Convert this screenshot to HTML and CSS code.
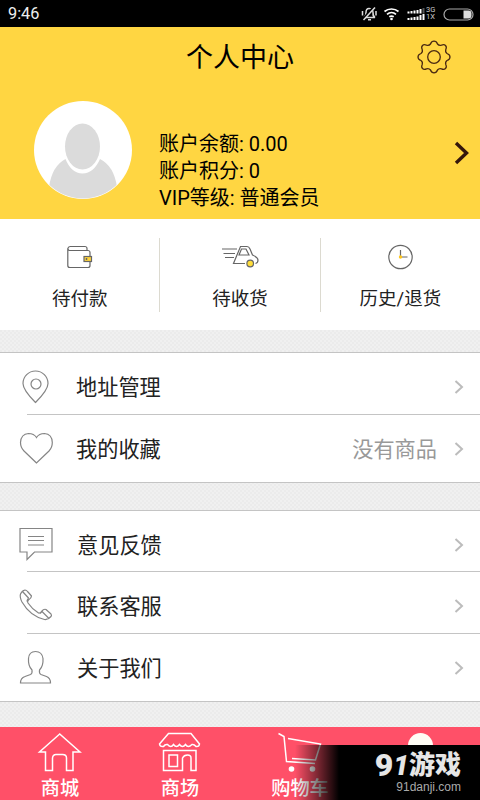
FILE: index.html
```html
<!DOCTYPE html>
<html lang="zh-CN">
<head>
<meta charset="utf-8">
<title>个人中心</title>
<link rel="stylesheet" href="styles.css">
</head>
<body>
<div class="screen">
  <div class="status">
    <span class="time">9:46</span>
    <svg class="status-icons" width="116" height="26" viewBox="0 0 116 26" fill="none" stroke="#ddd" stroke-width="1.200">
      <path d="M4 16.500c2-1 2-3 2-5 0-3 1.500-4 3-4s4 1 4 4 0 4 2 5zM8 18.700h3M2.500 10v4.500M16 10v4.500" stroke-width="1.500"/>
      <path d="M3 18L14 5.500" stroke="#000" stroke-width="2"/><path d="M3.500 19L15 6.500" stroke-width="1.500"/>
      <g stroke="#fff" stroke-width="1.700"><path d="M24.500 10.500a11 11 0 0 1 14 0M27 13.300a7 7 0 0 1 9 0M29.300 15.800a4 4 0 0 1 4.400 0"/></g>
      <circle cx="31.500" cy="18" r="1.300" fill="#fff" stroke="none"/>
      <g stroke="#fff" stroke-width="2"><path d="M48.500 10.500v2M51.500 10v2.500M54.500 9.500v3M57.500 9v3.500M60.500 8v4.500M48.500 17v2M51.500 16.500v2.500M54.500 16v3M57.500 15.500v3.500M60.500 14v5M63.500 13v6"/><path stroke="#555" d="M63.500 7v5.500"/></g>
      <rect x="84" y="8" width="29" height="11" rx="5.500" stroke="#aaa"/>
      <path d="M103.500 9.500h5a3 3 0 0 1 3 3v2a3 3 0 0 1-3 3h-5z" fill="#ddd" stroke="none"/>
    </svg>
    <div class="net"><div>3G</div><div>1X</div></div>
  </div>

  <header class="head">
    <div class="titlebar">
      <h1>个人中心</h1>
      <svg class="gear" width="36" height="36" viewBox="-18 -18 36 36" fill="none" stroke="#4b2a12" stroke-width="1.300" stroke-linejoin="round">
        <path d="M-3.500-13Q-2.500-15.800 0-15.800T3.500-13Q5-11 7.500-11.800Q10-13 11.500-11.500T11.800-7.500Q11-5 13-3.500Q16-2.500 16 0T13 3.500Q11 5 11.800 7.500Q13 10 11.500 11.500T7.500 11.800Q5 11 3.500 13Q2.500 15.800 0 15.800T-3.500 13Q-5 11-7.500 11.800Q-10 13-11.500 11.500T-11.800 7.500Q-11 5-13 3.500Q-16 2.500-16 0T-13-3.500Q-11-5-11.800-7.500Q-13-10-11.500-11.500T-7.500-11.800Q-5-11-3.500-13Z"/>
        <circle r="6.300"/>
      </svg>
    </div>
    <div class="profile">
      <svg class="avatar" width="98" height="98" viewBox="0 0 98 98">
        <defs><clipPath id="disc"><circle cx="49" cy="49" r="48.500"/></clipPath></defs>
        <circle cx="49" cy="49" r="49" fill="#fff"/>
        <g clip-path="url(#disc)" fill="#dbdbdb">
          <path d="M15 98V86Q18 65 31.500 58Q37 72 48.500 72.500Q60 72 66 58Q80 65 83 86V98Z"/>
          <ellipse cx="48.500" cy="45.500" rx="17.500" ry="23"/>
        </g>
      </svg>
      <div class="account">
        <div>账户余额: 0.00</div>
        <div>账户积分: 0</div>
        <div>VIP等级: 普通会员</div>
      </div>
      <svg class="go" width="16" height="24" viewBox="0 0 16 24" fill="none" stroke="#35170c" stroke-width="3.400"><path d="M2 2l10.500 10L2 22"/></svg>
    </div>
  </header>

  <nav class="orders">
    <div class="order">
      <svg width="40" height="28" viewBox="0 0 40 28" fill="none" stroke="#666" stroke-width="1.200">
        <path d="M27 7V5.500a2 2 0 0 0-2-2H10.500a2.500 2.500 0 0 0-2.700 2v17a2 2 0 0 0 2 2H28a2 2 0 0 0 2-2V9.500A2 2 0 0 0 28 7.500H9.500A1.800 1.800 0 0 1 8 5.500"/>
        <rect x="24" y="13.500" width="7.500" height="5" fill="#ffd43c"/><path d="M26.500 15v2" stroke-width="1.500"/>
      </svg>
      <span>待付款</span>
    </div>
    <div class="order">
      <svg width="40" height="28" viewBox="0 0 40 28" fill="none" stroke="#666" stroke-width="1.200">
        <path d="M2 6h15M3.500 10.500h11.500M5 14.500h9M25 20.500H13.500L20.500 3.500H27Q29 3.500 30 6L32.500 12Q38 14.500 38 17Q38 20 35.500 20.500M19 12l2.500-6H26l3 6z"/>
        <circle cx="30.200" cy="20.500" r="3.300" fill="#ffdd3a"/>
      </svg>
      <span>待收货</span>
    </div>
    <div class="order">
      <svg width="40" height="28" viewBox="0 0 40 28" fill="none" stroke="#666" stroke-width="1.200">
        <circle cx="20.500" cy="14" r="11.700"/><path d="M20.500 7v7h7"/><circle cx="20.500" cy="14" r="1.700" fill="#ffc61a" stroke="none"/>
      </svg>
      <span>历史/退货</span>
    </div>
  </nav>

  <section class="group">
    <div class="row">
      <svg class="ico" width="36" height="36" viewBox="0 0 36 36"><path d="M17.500 34.500Q5 22 5 15.500a12.500 12.500 0 0 1 25 0Q30 22 17.500 34.500z"/><circle cx="18" cy="16" r="5"/></svg>
      <span class="label">地址管理</span>
      <svg class="chev" width="10" height="16" viewBox="0 0 10 16"><path d="M1.500 2l6.500 6-6.500 6"/></svg>
    </div>
    <div class="row tall">
      <svg class="ico" width="36" height="36" viewBox="0 0 36 36"><path d="M18.500 33L6 21Q2.500 17.500 2.500 12.500Q3 4 10.500 3.500Q16 3.500 18.500 7.500Q21 3.500 26.500 3.500Q34 4 34.300 12.500Q34.300 17.500 31 21z"/></svg>
      <span class="label">我的收藏</span>
      <span class="note">没有商品</span>
      <svg class="chev" width="10" height="16" viewBox="0 0 10 16"><path d="M1.500 2l6.500 6-6.500 6"/></svg>
    </div>
  </section>

  <section class="group second">
    <div class="row first">
      <svg class="ico" width="36" height="36" viewBox="0 0 36 36"><path d="M2 2.500h32v23.500H16.500L9 33.500V26H2zM10 10.500h16M10 14.500h16M10 19h16"/></svg>
      <span class="label">意见反馈</span>
      <svg class="chev" width="10" height="16" viewBox="0 0 10 16"><path d="M1.500 2l6.500 6-6.500 6"/></svg>
    </div>
    <div class="row">
      <svg class="ico" width="36" height="36" viewBox="0 0 36 36" stroke-linejoin="round"><path d="M2.500 7Q4 3.500 7 3Q8.500 3 9.500 4.500L13.500 9Q13.500 11 10.500 13Q9 14 10 16Q14 22 20.500 26Q22 26.500 23.500 24.500Q26 21.500 28 22.500L33 27Q34 28.500 33 29.500Q30 33 26.500 32.500Q12 29 4 15Q1.500 10 2.500 7zM4.500 4.500l6 6.500Q9 13 9 14.500M22 26.500l2-2 6.500 6.500"/></svg>
      <span class="label">联系客服</span>
      <svg class="chev" width="10" height="16" viewBox="0 0 10 16"><path d="M1.500 2l6.500 6-6.500 6"/></svg>
    </div>
    <div class="row tall">
      <svg class="ico" width="36" height="36" viewBox="0 0 36 36"><path d="M2.500 34Q2.500 29 7 27.500L12.500 25.500Q14.500 24.500 14 21Q10 17 10.500 9.500Q11 2.500 17.500 2.500T25 9.500Q25.500 17 21.500 21Q21 24.500 23 25.500L28.500 27.500Q32.500 29 32.500 34z"/></svg>
      <span class="label">关于我们</span>
      <svg class="chev" width="10" height="16" viewBox="0 0 10 16"><path d="M1.500 2l6.500 6-6.500 6"/></svg>
    </div>
  </section>

  <nav class="tabs">
    <div class="tab">
      <svg width="46" height="42" viewBox="0 0 46 42"><path d="M22.700 2L2.500 20H8.500V38.500H15.500V26Q16 22.500 19 22.500H25.500Q29.500 22.500 29.500 26V38.500H36V20H43z"/></svg>
      <span>商城</span>
    </div>
    <div class="tab">
      <svg width="46" height="42" viewBox="0 0 46 42"><path d="M11.500 1.500H34L42.500 12Q42 15 39 14.500Q37 12 35 12.500Q31 16.500 28.500 12.500Q25.500 16.500 22.500 12.500Q19.500 16.500 16.500 12.500Q14 16.500 10.500 12.500Q8 12 6.500 14.500Q3 15 2.500 12zM6.500 18.500H39V38.500H34V26Q34 23 30.500 23T25.500 26V38.500H6.500zM12 23H20.500V34.500H12z"/></svg>
      <span>商场</span>
    </div>
    <div class="tab">
      <svg width="46" height="42" viewBox="0 0 46 42"><path d="M1.500 1.500L7 4.500L9.500 29.500L38 31.500M11 6.500L43.500 12L38.500 28L15 26.500"/><g fill="#fff" stroke="none"><circle cx="14.500" cy="37" r="2.800"/><circle cx="35.500" cy="37" r="2.800"/></g></svg>
      <span>购物车</span>
    </div>
    <div class="tab">
      <svg width="46" height="42" viewBox="0 0 46 42"><circle cx="23.500" cy="13.500" r="12.500" fill="#fffdf5" stroke="none"/></svg>
    </div>
  </nav>

  <div class="brand">
    <div class="brand-name"><span class="nine">9</span><span class="one">1</span><span class="game">游戏</span></div>
    <div class="brand-url">91danji.com</div>
  </div>
</div>
</body>
</html>
```
FILE: styles.css
```css
* { box-sizing: border-box; }
body { margin: 0; }
.screen {
  position: relative;
  width: 480px;
  height: 800px;
  overflow: hidden;
  display: flex;
  flex-direction: column;
  color: #222;
  font-family: Roboto, "Noto Sans CJK SC", sans-serif;
  background: repeating-conic-gradient(#ebebeb 0 25%, #f0f0f0 0 50%) 0 0 / 4px 4px;
}
svg { display: block; flex: none; }

.status {
  position: relative;
  height: 27px;
  flex: none;
  background: #000;
  color: #eee;
  display: flex;
  align-items: center;
  justify-content: space-between;
  padding: 0 4px 0 8px;
}
.time { font-size: 16.300px; line-height: 26px; }
.net {
  position: absolute;
  left: 426px;
  top: 6px;
  font-size: 7.500px;
  line-height: 7px;
  color: #ccc;
}

.head { height: 192px; flex: none; background: #ffd642; color: #000; }
.titlebar {
  height: 60px;
  display: flex;
  align-items: center;
  padding: 0 28px 0 64px;
}
h1 {
  flex: 1;
  margin: 0;
  padding-top: 3px;
  text-align: center;
  font-size: 27px;
  line-height: 57px;
  font-weight: 400;
}
.profile { display: flex; align-items: flex-start; padding: 14px 10px 0 34px; }
.account {
  flex: 1;
  padding: 30px 0 0 27px;
  font-size: 20px;
  line-height: 27px;
}
.go { margin-top: 40px; }

.orders { height: 111px; flex: none; display: flex; background: #fff; padding-top: 19px; }
.order {
  flex: 1;
  height: 74px;
  display: flex;
  flex-direction: column;
  align-items: center;
  padding-top: 5px;
  font-size: 18.500px;
}
.order + .order { border-left: 1px solid #dcdad0; }
.order span { line-height: 28px; margin-top: 14px; }

.group {
  margin-top: 22px;
  flex: none;
  background: #fff;
  border-top: 1px solid #c4c4c4;
  border-bottom: 1px solid #c4c4c4;
}
.second { margin-top: 27px; }
.row {
  height: 62px;
  display: flex;
  align-items: center;
  padding: 6px 16px 0 18px;
  background: linear-gradient(#c4c4c4, #c4c4c4) 27px 100% / 100% 1px no-repeat;
}
.row.first { height: 61px; }
.row.tall { height: 67px; padding-bottom: 5px; background: none; }
.ico, .chev { fill: none; stroke: #858585; stroke-width: 1.200; }
.ico { margin-bottom: 2px; }
.chev { stroke: #bcbcbc; stroke-width: 2; }
.label { flex: 1; padding: 2px 0 0 22px; font-size: 21.200px; line-height: 30px; }
.second .label { padding-left: 23px; }
.note { margin-right: 17px; padding-top: 2px; color: #999; font-size: 21.200px; line-height: 30px; }

.tabs {
  height: 73px;
  margin-top: auto;
  flex: none;
  display: flex;
  background: #ff5068;
  color: #fff;
}
.tab {
  flex: 1;
  display: flex;
  flex-direction: column;
  align-items: center;
  padding-top: 5px;
  font-size: 19.200px;
  font-weight: 500;
}
.tab svg { fill: none; stroke: #fff; stroke-width: 1.500; }
.tab span { line-height: 28px; padding-top: 1px; }

.brand {
  position: absolute;
  right: 0;
  top: 745px;
  width: 185px;
  height: 55px;
  padding: 6px 19px 0 0;
  background: linear-gradient(90deg, rgba(0, 0, 0, 0), #000 44px);
  color: #e6e6e6;
  text-align: right;
}
.brand-name { display: flex; justify-content: flex-end; height: 29px; line-height: 29px; font-weight: 900; }
.nine { font-size: 32px; }
.one { font-size: 28px; font-style: italic; }
.game { font-size: 26px; }
.brand-url {
  font-family: "Liberation Sans", sans-serif;
  font-size: 12px;
  line-height: 14px;
  color: #aaa;
}
```
